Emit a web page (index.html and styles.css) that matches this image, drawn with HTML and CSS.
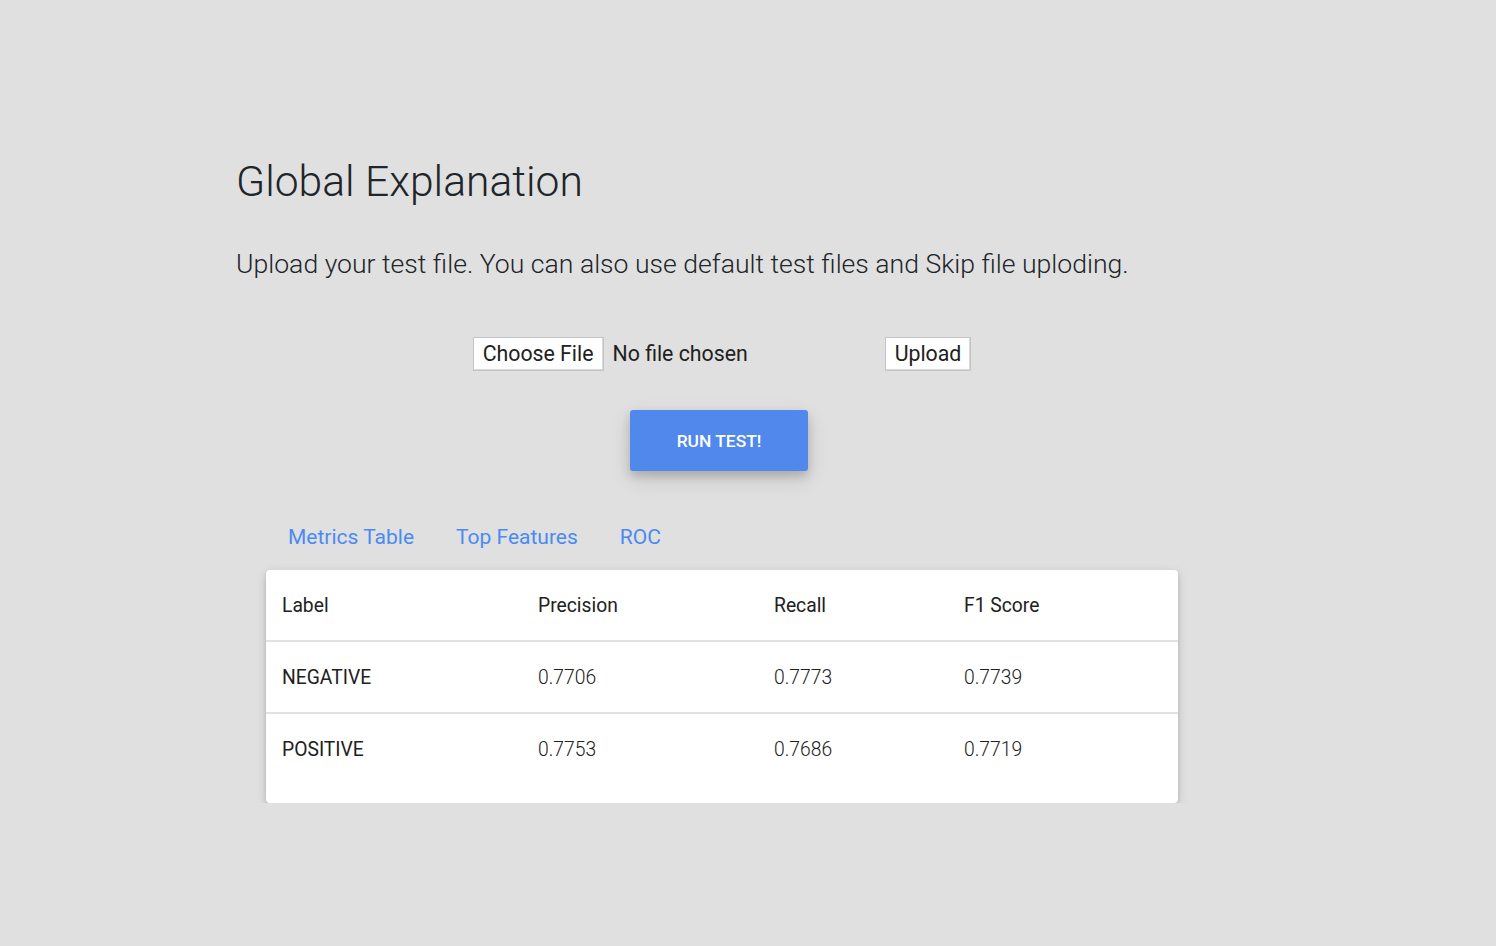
FILE: index.html
```html
<!DOCTYPE html>
<html>
<head>
<meta charset="utf-8">
<link rel="stylesheet" href="styles.css">
</head>
<body>
<main class="page">
  <div class="content">
    <h1 class="title">Global Explanation</h1>
    <p class="lead">Upload your test file. You can also use default test files and Skip file uploding.</p>
    <div class="upload-row">
      <div class="file-input">
        <span class="btn-plain">Choose File</span>
        <span class="file-name">No file chosen</span>
      </div>
      <span class="btn-plain">Upload</span>
    </div>
    <div class="run-row">
      <button class="btn-run">RUN TEST!</button>
    </div>
    <nav class="tabs">
      <a class="tab">Metrics Table</a>
      <a class="tab">Top Features</a>
      <a class="tab">ROC</a>
    </nav>
    <div class="card">
      <table class="metrics">
        <thead>
          <tr><th class="c1">Label</th><th class="c2">Precision</th><th class="c3">Recall</th><th class="c4">F1 Score</th></tr>
        </thead>
        <tbody>
          <tr><td class="lbl">NEGATIVE</td><td>0.7706</td><td>0.7773</td><td>0.7739</td></tr>
          <tr><td class="lbl">POSITIVE</td><td>0.7753</td><td>0.7686</td><td>0.7719</td></tr>
        </tbody>
      </table>
    </div>
  </div>
</main>
</body>
</html>
```
FILE: styles.css
```css
html, body {
  margin: 0;
  padding: 0;
  background: #e0e0e0;
  font-family: Roboto, "Liberation Sans", sans-serif;
  color: #212121;
}
.page {
  padding: 151px 0 0 236px;
}
.content {
  width: 972px;
}
.title {
  margin: 0;
  font-size: 42.6px;
  font-weight: 300;
  line-height: 60px;
  color: #212529;
}
.lead {
  margin: 33px 0 0 0;
  font-size: 26.6px;
  font-weight: 300;
  line-height: 40px;
  color: #212529;
}
.upload-row {
  margin-top: 53px;
  display: flex;
  justify-content: center;
  align-items: center;
}
.file-input {
  width: 412px;
  display: flex;
  align-items: center;
}
.btn-plain {
  display: inline-block;
  box-sizing: border-box;
  height: 34px;
  padding: 0 9px;
  background: #fff;
  border: 1px solid #c4c4c4;
  box-shadow: inset -1px -1px 0 #d8d8d8;
  font-size: 21.3px;
  line-height: 32px;
  color: #212121;
}
.file-name {
  margin-left: 9px;
  font-size: 21.3px;
  line-height: 32px;
  color: #212121;
}
.run-row {
  margin-top: 39px;
  padding-right: 6px;
  display: flex;
  justify-content: center;
}
.btn-run {
  width: 178px;
  height: 61px;
  border: none;
  border-radius: 3px;
  background: #5088eb;
  color: #fff;
  font-family: Roboto, "Liberation Sans", sans-serif;
  font-size: 17.4px;
  font-weight: 500;
  box-shadow: 0 5px 10px rgba(0,0,0,0.16), 0 8px 22px rgba(0,0,0,0.12);
  cursor: pointer;
}
.tabs {
  margin-top: 49px;
  padding-left: 52px;
  display: flex;
  gap: 42px;
  height: 34px;
  align-items: center;
}
.tab {
  font-size: 21px;
  color: #4a8af4;
  text-decoration: none;
}
.card {
  margin: 16px 30px 0 30px;
  background: #fff;
  border-radius: 4px;
  box-shadow: 0 3px 4px rgba(0,0,0,0.14), 0 3px 12px rgba(0,0,0,0.12);
  padding-bottom: 19px;
}
.metrics {
  width: 100%;
  border-collapse: collapse;
  font-size: 19.3px;
}
.metrics th, .metrics td {
  text-align: left;
  padding: 0 16px;
  height: 70px;
}
.metrics th {
  font-weight: 400;
  color: #212121;
}
.metrics thead tr, .metrics tbody tr:first-child {
  border-bottom: 2px solid #dfe1e4;
}
.metrics td {
  font-weight: 300;
  color: #212121;
}
.metrics td.lbl {
  font-weight: 400;
}
.c1 { width: 224px; }
.c2 { width: 204px; }
.c3 { width: 158px; }
```
